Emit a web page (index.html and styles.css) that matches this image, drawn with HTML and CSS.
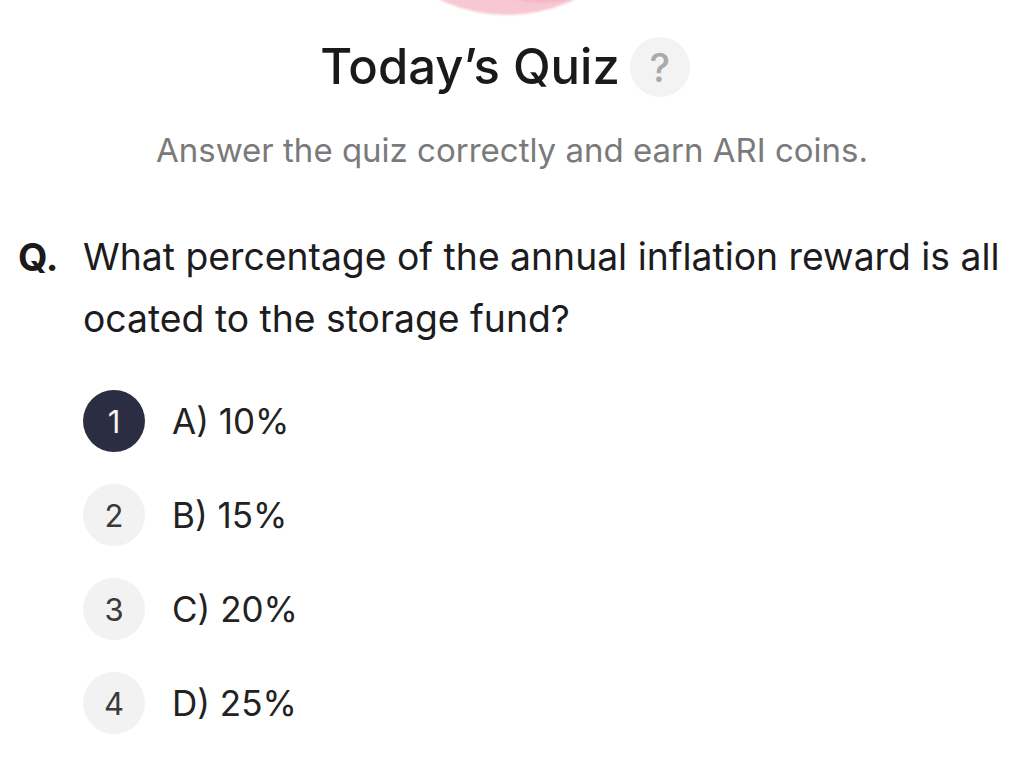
FILE: index.html
```html
<!DOCTYPE html>
<html lang="en">
<head>
<meta charset="utf-8">
<title>Today's Quiz</title>
<link rel="stylesheet" href="styles.css">
</head>
<body>
<div class="page">
  <div class="blob"><div class="blob-inner"></div></div>
  <header class="head">
    <div class="title-row">
      <h1 class="title">Today’s Quiz</h1>
      <span class="help">?</span>
    </div>
    <p class="subtitle">Answer the quiz correctly and earn ARI coins.</p>
  </header>
  <section class="question">
    <div class="q-label">Q.</div>
    <div class="q-body">
      <p class="q-text">What percentage of the annual inflation reward is all ocated to the storage fund?</p>
      <ul class="options">
        <li class="option selected"><span class="num">1</span><span class="opt-text">A) 10%</span></li>
        <li class="option"><span class="num">2</span><span class="opt-text">B) 15%</span></li>
        <li class="option"><span class="num">3</span><span class="opt-text">C) 20%</span></li>
        <li class="option"><span class="num">4</span><span class="opt-text">D) 25%</span></li>
      </ul>
    </div>
  </section>
</div>
</body>
</html>
```
FILE: styles.css
```css
* { box-sizing: border-box; }
html, body {
  margin: 0;
  padding: 0;
  background: #ffffff;
}
body {
  font-family: Inter, "Noto Sans", "Liberation Sans", sans-serif;
  color: #1c1c1e;
  overflow: hidden;
}
.page {
  width: 1024px;
  height: 764px;
  overflow: hidden;
}
.blob {
  width: 310px;
  height: 310px;
  margin: -295px auto 0;
  border-radius: 50%;
  background: #f7c8d3;
  position: relative;
  left: -5px;
  display: flex;
  justify-content: center;
  align-items: flex-end;
  filter: blur(1px);
}
.blob-inner {
  width: 70px;
  height: 20px;
  margin-bottom: 12px;
  margin-left: 70px;
  border-radius: 50%;
  background: #f1aebf;
  opacity: 0.6;
}
.head {
  display: flex;
  flex-direction: column;
  align-items: center;
}
.title-row {
  display: flex;
  align-items: center;
  gap: 10px;
  margin-top: 22px;
  padding-right: 14px;
}
.title {
  margin: 0;
  font-size: 49px;
  font-weight: 500;
  color: #1a1a1a;
  line-height: 60px;
}
.help {
  width: 60px;
  height: 60px;
  border-radius: 50%;
  background: #f3f3f3;
  color: #a9a9a9;
  font-size: 39px;
  font-weight: 500;
  display: flex;
  align-items: center;
  justify-content: center;
  line-height: 1;
}
.subtitle {
  margin: 33px 0 0;
  font-size: 33px;
  font-weight: 400;
  color: #7a7a7a;
  line-height: 40px;
}
.question {
  display: flex;
  margin-top: 56px;
  padding-left: 18px;
}
.q-label {
  width: 65px;
  flex: none;
  font-size: 38px;
  font-weight: 700;
  line-height: 62px;
  color: #1a1a1a;
}
.q-body {
  flex: 1;
  padding-right: 4px;
}
.q-text {
  margin: 0;
  font-size: 37.3px;
  font-weight: 400;
  line-height: 62px;
  color: #1c1c1e;
}
.options {
  list-style: none;
  margin: 40px 0 0;
  padding: 0;
  display: flex;
  flex-direction: column;
  gap: 32px;
}
.option {
  display: flex;
  align-items: center;
  gap: 27px;
  height: 62px;
}
.num {
  width: 62px;
  height: 62px;
  flex: none;
  border-radius: 50%;
  background: #f2f2f2;
  color: #3a3a3a;
  font-size: 31px;
  display: flex;
  align-items: center;
  justify-content: center;
}
.option.selected .num {
  background: #2b2d42;
  color: #f5f5f5;
}
.opt-text {
  font-size: 35px;
  color: #222222;
}
```
